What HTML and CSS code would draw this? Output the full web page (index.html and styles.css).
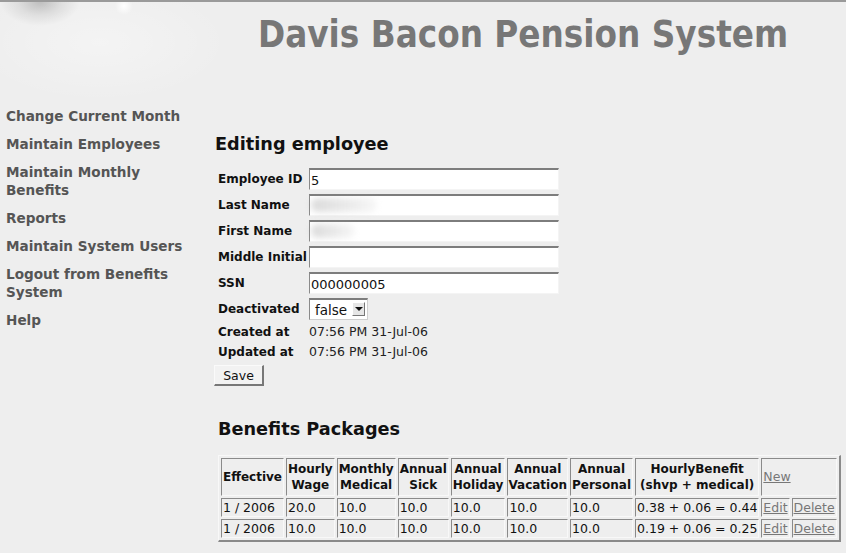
FILE: index.html
```html
<!DOCTYPE html>
<html>
<head>
<meta charset="utf-8">
<title>Davis Bacon Pension System</title>
<link rel="stylesheet" href="styles.css">
</head>
<body>
<div class="header">
  <h1 class="title">Davis Bacon Pension System</h1>
</div>
<div class="layout">
  <nav class="sidebar">
    <a href="#">Change Current Month</a>
    <a href="#">Maintain Employees</a>
    <a href="#">Maintain Monthly Benefits</a>
    <a href="#">Reports</a>
    <a href="#">Maintain System Users</a>
    <a href="#">Logout from Benefits System</a>
    <a href="#">Help</a>
  </nav>
  <main class="main">
    <h2 class="heading">Editing employee</h2>
    <div class="form">
      <label class="lbl">Employee ID</label><div class="field"><input class="inp" type="text" value="5"></div>
      <label class="lbl">Last Name</label><div class="field"><input class="inp" type="text" value=""><span class="blur b1"></span></div>
      <label class="lbl">First Name</label><div class="field"><input class="inp" type="text" value=""><span class="blur b2"></span></div>
      <label class="lbl">Middle Initial</label><div class="field"><input class="inp" type="text" value=""></div>
      <label class="lbl">SSN</label><div class="field"><input class="inp" type="text" value="000000005"></div>
      <label class="lbl">Deactivated</label><div class="field"><span class="select">false<span class="arrow"></span></span></div>
      <label class="lbl txt">Created at</label><div class="val">07:56 PM 31-Jul-06</div>
      <label class="lbl txt">Updated at</label><div class="val">07:56 PM 31-Jul-06</div>
    </div>
    <button class="save" type="button">Save</button>
    <h2 class="heading heading2">Benefits Packages</h2>
    <table class="pkg">
      <tr>
        <th>Effective</th>
        <th>Hourly<br>Wage</th>
        <th>Monthly<br>Medical</th>
        <th>Annual<br>Sick</th>
        <th>Annual<br>Holiday</th>
        <th class="tight">Annual<br>Vacation</th>
        <th>Annual<br>Personal</th>
        <th>HourlyBenefit<br>(shvp + medical)</th>
        <td colspan="2" class="newcell"><a href="#">New</a></td>
      </tr>
      <tr>
        <td>1 / 2006</td><td>20.0</td><td>10.0</td><td>10.0</td><td>10.0</td><td>10.0</td><td>10.0</td><td>0.38 + 0.06 = 0.44</td><td><a href="#">Edit</a></td><td><a href="#">Delete</a></td>
      </tr>
      <tr>
        <td>1 / 2006</td><td>10.0</td><td>10.0</td><td>10.0</td><td>10.0</td><td>10.0</td><td>10.0</td><td>0.19 + 0.06 = 0.25</td><td><a href="#">Edit</a></td><td><a href="#">Delete</a></td>
      </tr>
    </table>
  </main>
</div>
</body>
</html>
```

FILE: styles.css
```css
html, body {
  margin: 0;
  padding: 0;
}
body {
  background: #eeeeee;
  font-family: "DejaVu Sans", Verdana, sans-serif;
  font-size: 12px;
  color: #222;
  border-top: 2px solid #9a9a9a;
  height: 551px;
  overflow: hidden;
}
.header {
  height: 104px;
  box-sizing: border-box;
  padding-left: 258px;
  padding-top: 11px;
  background:
    radial-gradient(ellipse 40px 24px at 40px 0px, rgba(0,0,0,0.2), rgba(0,0,0,0.07) 55%, rgba(0,0,0,0) 100%),
    radial-gradient(circle 9px at 124px 4px, rgba(255,255,255,1), rgba(255,255,255,0) 100%),
    radial-gradient(ellipse 130px 60px at 100px 40px, rgba(255,255,255,0.35), rgba(255,255,255,0) 100%),
    #eeeeee;
}
.title {
  margin: 0;
  font-family: "DejaVu Sans Condensed", "DejaVu Sans", sans-serif;
  font-stretch: condensed;
  font-weight: bold;
  font-size: 36.4px;
  line-height: 44px;
  color: #777777;
}
.layout {
  display: flex;
}
.sidebar {
  width: 192px;
  flex: none;
  padding-left: 6px;
  padding-top: 1px;
  display: flex;
  flex-direction: column;
  gap: 10px;
}
.sidebar a {
  font-size: 13.6px;
  font-weight: bold;
  line-height: 18px;
  color: #555555;
  text-decoration: none;
}
.main {
  padding-left: 17px;
  flex: 1;
}
.heading {
  margin: 0;
  font-size: 17.7px;
  line-height: 24px;
  font-weight: bold;
  color: #111;
  padding-top: 26px;
}
.heading2 {
  padding-top: 31px;
  padding-left: 3px;
}
.form {
  display: grid;
  grid-template-columns: 91px 250px;
  row-gap: 4px;
  margin-top: 12px;
  margin-left: 3px;
  align-items: center;
}
.lbl {
  font-weight: bold;
  font-size: 12px;
  color: #111;
  line-height: 22px;
}
.lbl.txt {
  line-height: 16px;
}
.field {
  position: relative;
  height: 22px;
}
.inp {
  box-sizing: border-box;
  width: 250px;
  height: 22px;
  margin: 0;
  padding: 2px 2px 0 1px;
  font-family: "DejaVu Sans", Verdana, sans-serif;
  font-size: 13px;
  color: #111;
  background: #ffffff;
  border: none;
  border-top: 2px solid #7d7d7d;
  border-left: 1px solid #8a8a8a;
  border-right: 1px solid #f4f4f4;
  border-bottom: 1px solid #f4f4f4;
  outline: none;
}
.blur {
  position: absolute;
  top: 4px;
  left: 2px;
  height: 14px;
  border-radius: 7px;
  background: linear-gradient(90deg, rgba(150,150,150,0.35), rgba(200,200,200,0.15));
  filter: blur(3px);
}
.b1 { width: 66px; }
.b2 { width: 44px; }
.select {
  box-sizing: border-box;
  display: inline-flex;
  align-items: center;
  width: 59px;
  height: 22px;
  padding-left: 5px;
  font-size: 13.5px;
  color: #111;
  background: #fff;
  border-top: 2px solid #7d7d7d;
  border-left: 1px solid #8a8a8a;
  border-right: 1px solid #cfcfcf;
  border-bottom: 1px solid #cfcfcf;
  position: relative;
}
.arrow {
  position: absolute;
  right: 2px;
  top: 2px;
  width: 13px;
  height: 14px;
  box-sizing: border-box;
  background: #e6e6e6;
  border-top: 1px solid #fff;
  border-left: 1px solid #fff;
  border-right: 1px solid #777;
  border-bottom: 1px solid #777;
}
.arrow::after {
  content: "";
  position: absolute;
  left: 2px;
  top: 4px;
  border-left: 4px solid transparent;
  border-right: 4px solid transparent;
  border-top: 4px solid #111;
}
.val {
  font-size: 12.5px;
  line-height: 16px;
  color: #222;
}
.save {
  margin: 5px 0 0 -1px;
  width: 50px;
  height: 21px;
  padding: 0;
  font-family: "DejaVu Sans", Verdana, sans-serif;
  font-size: 12.5px;
  color: #111;
  background: #f2f2f2;
  border-top: 1px solid #fafafa;
  border-left: 1px solid #fafafa;
  border-right: 2px solid #777;
  border-bottom: 2px solid #777;
}
.pkg {
  margin-top: 14px;
  margin-left: 3px;
  border-collapse: separate;
  border-spacing: 2px;
  border-top: 1px solid #f8f8f8;
  border-left: 1px solid #f8f8f8;
  border-right: 2px solid #8a8a8a;
  border-bottom: 2px solid #8a8a8a;
}
.pkg th, .pkg td {
  border-top: 1px solid #8a8a8a;
  border-left: 1px solid #8a8a8a;
  border-right: 1px solid #f8f8f8;
  border-bottom: 1px solid #f8f8f8;
  font-size: 12.5px;
  line-height: 16px;
  color: #111;
  white-space: nowrap;
}
.pkg th {
  font-size: 12px;
  font-weight: bold;
  text-align: center;
  padding: 2px 1px;
}
.pkg th.tight {
  padding: 2px 0;
}
.pkg td {
  height: 17px;
  padding: 0 1px;
  text-align: left;
}
.pkg .newcell {
  vertical-align: middle;
}
.pkg a {
  color: #777777;
  text-decoration: underline;
}
```
